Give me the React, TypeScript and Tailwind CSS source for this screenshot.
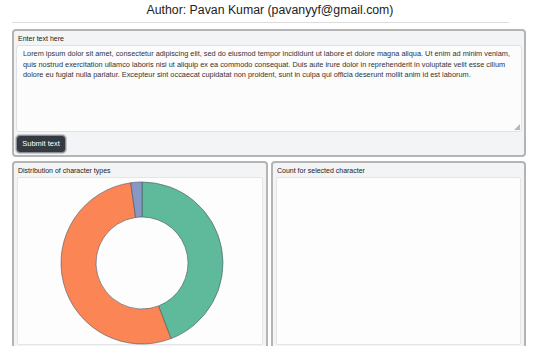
const LOREM =
  ' Lorem ipsum dolor sit amet, consectetur adipiscing elit, sed do eiusmod tempor incididunt ut labore et dolore magna aliqua. Ut enim ad minim veniam, quis nostrud exercitation ullamco laboris nisi ut aliquip ex ea commodo consequat. Duis aute irure dolor in reprehenderit in voluptate velit esse cillum dolore eu fugiat nulla pariatur. Excepteur sint occaecat cupidatat non proident, sunt in culpa qui officia deserunt mollit anim id est laborum.';

const slices = [
  { from: 0, to: 159, color: '#5fba9c' },
  { from: 159, to: 352, color: '#fb8554' },
  { from: 352, to: 360, color: '#8797c6' },
];

function pt(cx: number, cy: number, r: number, deg: number) {
  const a = (deg * Math.PI) / 180;
  return [cx + r * Math.sin(a), cy - r * Math.cos(a)];
}

function arc(cx: number, cy: number, ro: number, ri: number, from: number, to: number) {
  const large = to - from > 180 ? 1 : 0;
  const [x1, y1] = pt(cx, cy, ro, from);
  const [x2, y2] = pt(cx, cy, ro, to);
  const [x3, y3] = pt(cx, cy, ri, to);
  const [x4, y4] = pt(cx, cy, ri, from);
  return `M${x1},${y1} A${ro},${ro} 0 ${large} 1 ${x2},${y2} L${x3},${y3} A${ri},${ri} 0 ${large} 0 ${x4},${y4} Z`;
}

function Donut() {
  return (
    <svg width="246" height="168" viewBox="0 0 246 168">
      {slices.map((s) => (
        <path key={s.color} d={arc(124, 85, 81, 46, s.from, s.to)} fill={s.color} stroke="#4b5563" strokeWidth={0.6} />
      ))}
    </svg>
  );
}

export default function App() {
  return (
    <div className="h-[346px] w-[540px] overflow-hidden bg-white font-['Liberation_Sans',Arial,sans-serif] text-[#222]">
      <div className="pt-[3px] pb-[5px] text-center text-[12.3px] leading-[14px]">
        Author: Pavan Kumar (pavanyyf@gmail.com)
      </div>
      <div className="mx-[12px] w-[497px] border-b border-[#dcdcdc]" />

      <div className="ml-[12px] mt-[6px] flex h-[128px] w-[514px] flex-col rounded-[4px] border-2 border-[#b4b4b4] bg-[#f3f4f6] px-[2px]">
        <div className="pl-[2px] pt-[3px] text-[7px] leading-[10px]">Enter text here</div>
        <div className="relative mt-[1px] h-[87px] w-[506px] rounded-[3px] border border-[#dfe1e4] bg-[#fcfcfc] px-[6px] pt-[3px] text-[7.35px] leading-[10.5px] text-[#333]">
          {LOREM}
          <svg className="absolute bottom-[1px] right-[1px]" width="6" height="6" viewBox="0 0 6 6">
            <path d="M6 0 L6 6 L0 6 Z" fill="#b8b8b8" />
          </svg>
        </div>
        <button className="mt-[3px] flex h-[18px] w-[50px] items-center justify-center rounded-[4px] border border-[#8a8f94] bg-[#343a40] text-[7.5px] text-white shadow-[0_0_0_1px_#c7c9cc]">
          Submit text
        </button>
      </div>

      <div className="ml-[12px] mt-[4px] flex w-[514px] gap-[3px]">
        <div className="h-[200px] w-[256px] rounded-[4px] border-2 border-[#b4b4b4] bg-[#f3f4f6] px-[3px]">
          <div className="pl-[1px] pt-[3px] text-[7px] leading-[10px]">Distribution of character types</div>
          <div className="mt-[1px] h-[168px] w-[246px] rounded-[2px] border border-[#e3e5e8] bg-[#fdfdfd]">
            <Donut />
          </div>
        </div>
        <div className="h-[200px] w-[255px] rounded-[4px] border-2 border-[#b4b4b4] bg-[#f3f4f6] px-[3px]">
          <div className="pl-[1px] pt-[3px] text-[7px] leading-[10px]">Count for selected character</div>
          <div className="mt-[1px] h-[168px] w-[245px] rounded-[2px] border border-[#e3e5e8] bg-[#fdfdfd]" />
        </div>
      </div>
    </div>
  );
}
